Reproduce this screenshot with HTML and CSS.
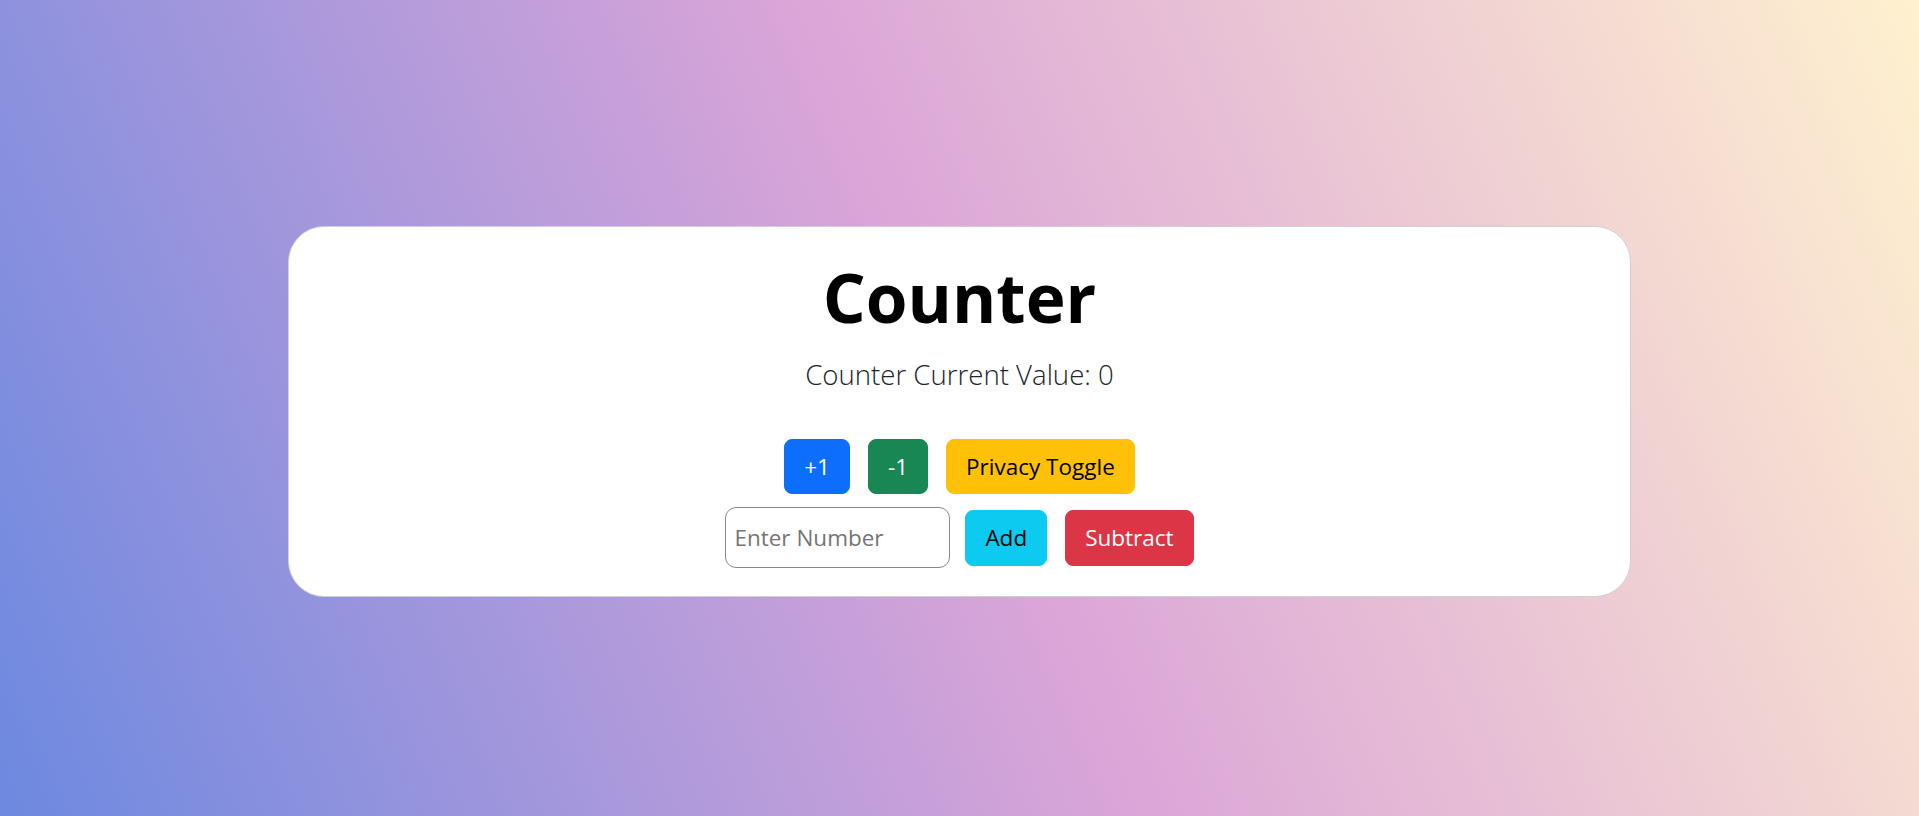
FILE: index.html
```html
<!DOCTYPE html>
<html lang="en">
<head>
<meta charset="utf-8">
<title>Counter</title>
<link rel="stylesheet" href="styles.css">
</head>
<body>
<main class="page">
  <section class="card">
    <h1 class="title">Counter</h1>
    <p class="value">Counter Current Value: 0</p>
    <div class="row row-top">
      <button class="btn btn-primary">+1</button>
      <button class="btn btn-success">-1</button>
      <button class="btn btn-warning">Privacy Toggle</button>
    </div>
    <div class="row row-bottom">
      <input class="num" type="number" placeholder="Enter Number">
      <button class="btn btn-info">Add</button>
      <button class="btn btn-danger">Subtract</button>
    </div>
  </section>
</main>
</body>
</html>
```

FILE: styles.css
```css
* { box-sizing: border-box; }
html, body { margin: 0; padding: 0; }
body {
  font-family: "Open Sans", "Noto Sans", "Liberation Sans", sans-serif;
  color: #212529;
  background: linear-gradient(67deg, #6c89e0 0%, #dba5d8 50%, #fff1cf 100%);
  min-height: 816px;
}
.page {
  height: 816px;
  display: flex;
  align-items: center;
  justify-content: center;
  padding-top: 7px;
}
.card {
  width: 70%;
  height: 371px;
  background: #fff;
  border: 1px solid #cfd0d3;
  border-radius: 36px;
  text-align: center;
  padding: 30px 20px 0;
  display: flex;
  flex-direction: column;
  align-items: center;
}
.title {
  margin: 0;
  font-size: 67.5px;
  font-weight: 700;
  line-height: 80px;
  color: #000;
}
.value {
  margin: 18px 0 0;
  font-size: 27.6px;
  font-weight: 300;
  line-height: 38px;
  color: #212529;
}
.row {
  display: flex;
  align-items: center;
  justify-content: center;
}
.row-top { margin-top: 46px; gap: 18px; }
.row-bottom { margin-top: 13px; gap: 15px; }
.row-bottom .btn-danger { margin-left: 3px; }
.btn {
  font-family: inherit;
  font-size: 22.5px;
  line-height: 1.5;
  height: 55px;
  padding: 0 19px;
  border: 1px solid transparent;
  border-radius: 8px;
  cursor: pointer;
}
.row-bottom .btn { height: 56px; }
.btn-primary { background: #0d6efd; border-color: #0d6efd; color: #fff; }
.btn-success { background: #198754; border-color: #198754; color: #fff; }
.btn-warning { background: #ffc107; border-color: #ffc107; color: #000; }
.btn-info { background: #0dcaf0; border-color: #0dcaf0; color: #000; }
.btn-danger { background: #dc3545; border-color: #dc3545; color: #fff; }
.num {
  width: 225px;
  height: 61px;
  border: 1px solid #8a8a8a;
  border-radius: 11px;
  padding: 0 8px;
  font-family: inherit;
  font-size: 22.5px;
  color: #212529;
  background: #fff;
}
.num::placeholder { color: #757575; }
```
